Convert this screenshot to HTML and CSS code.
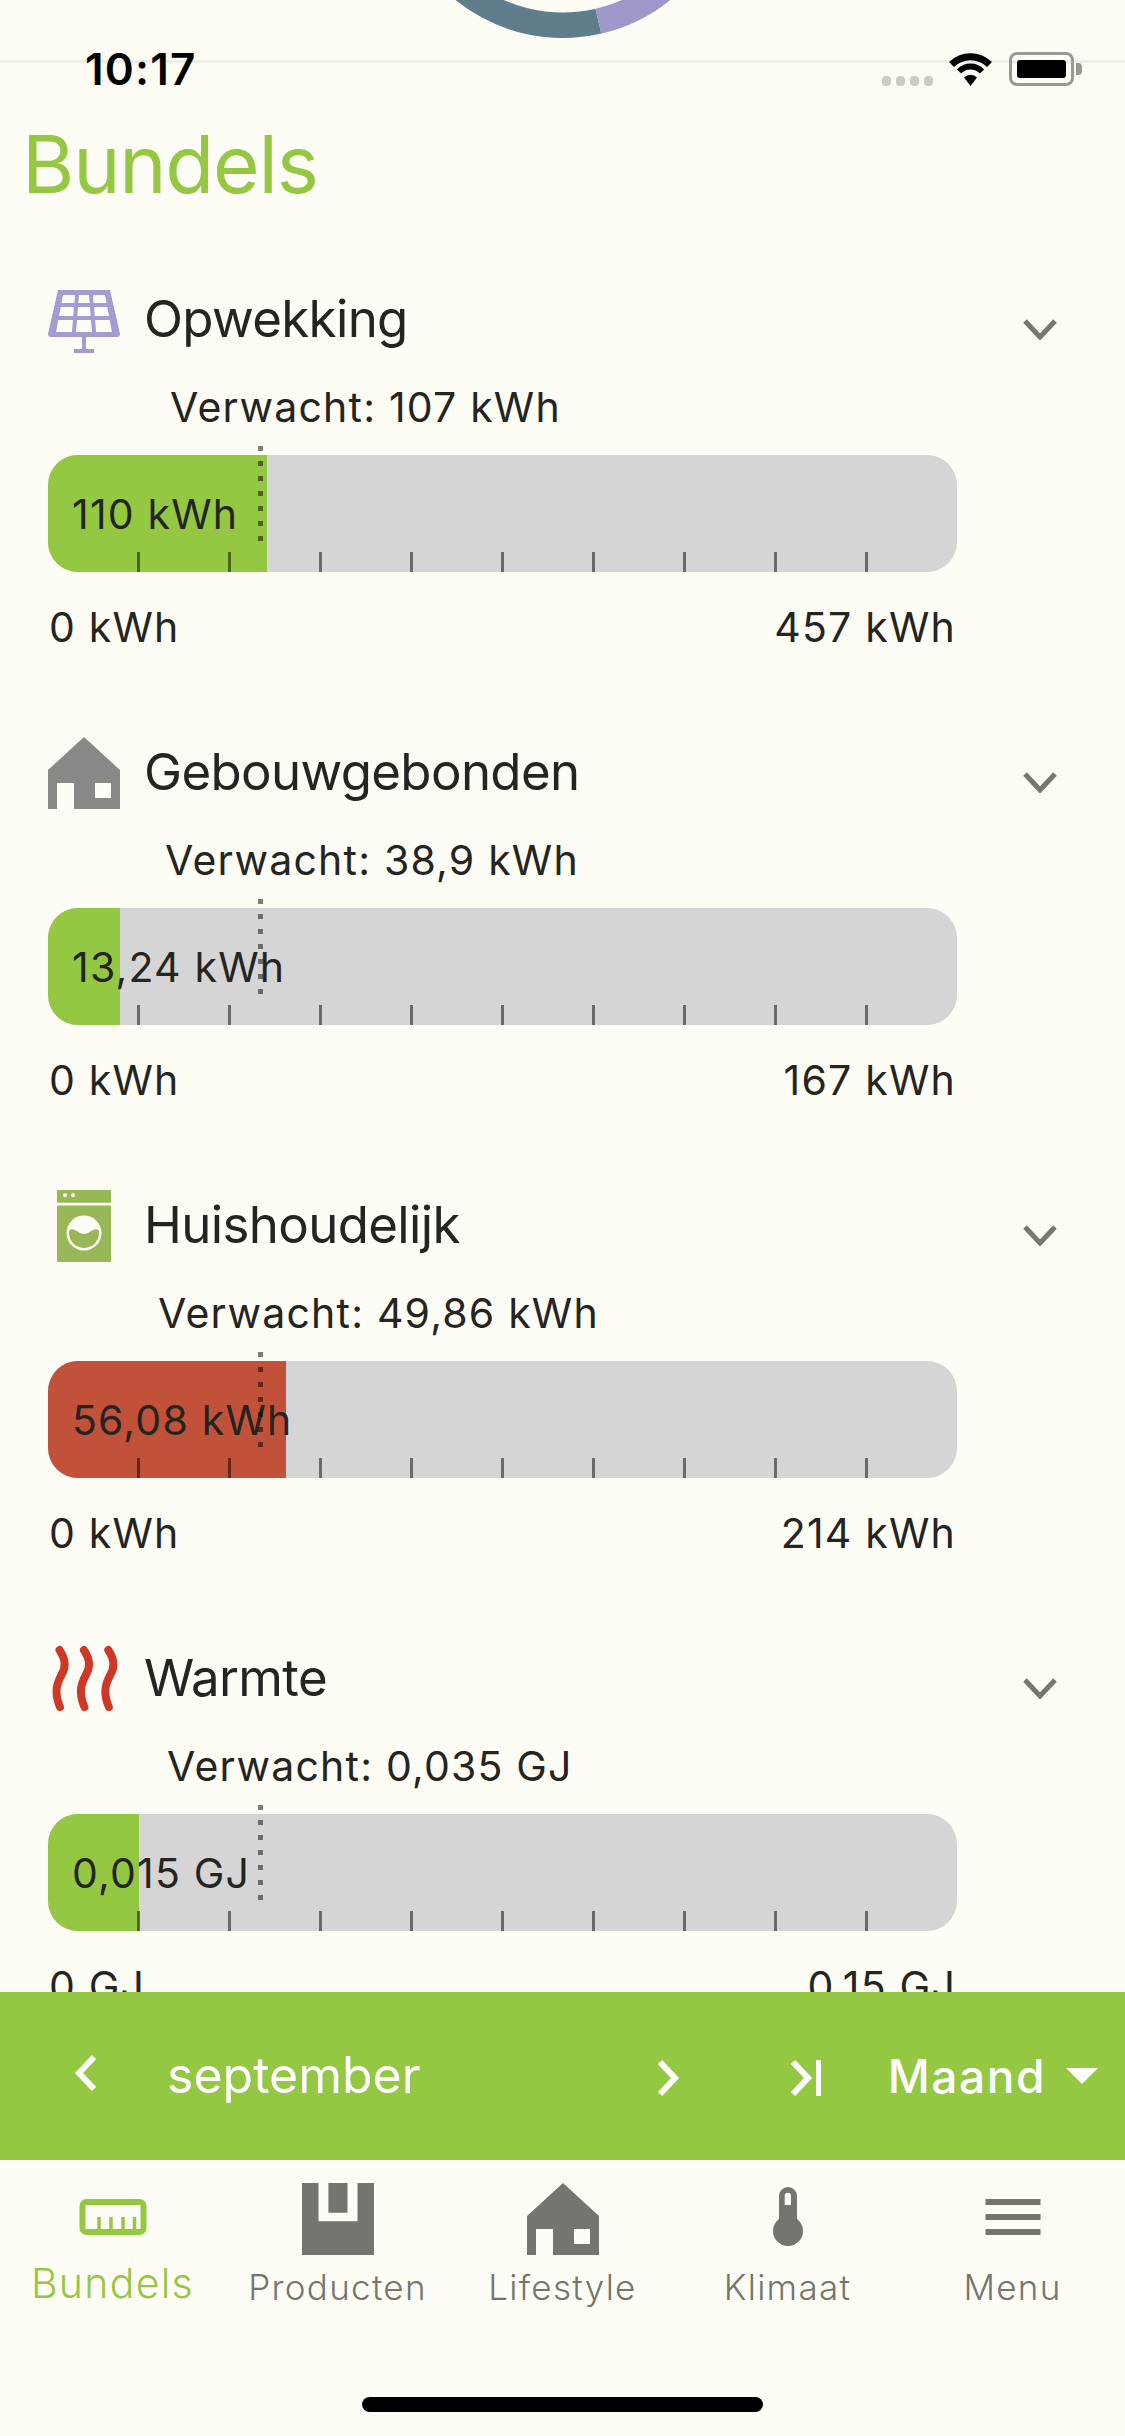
FILE: index.html
```html
<!DOCTYPE html>
<html lang="nl">

<head>
    <meta charset="UTF-8">
    <meta name="viewport" content="width=device-width, initial-scale=1.0">
    <title>Bundels</title>
    <link rel="stylesheet" href="styles.css">
</head>

<body>
    <div class="app">
        <!-- piece of the donut chart scrolled under the status bar -->
        <svg class="donut" width="1125" height="40" viewBox="0 0 1125 40">
            <path d="M415 -78A157.25 157.25 0 0 0 598.4 21.2" fill="none" stroke="#5f7d8c" stroke-width="25.5"/>
            <path d="M598.4 21.2A157.25 157.25 0 0 0 711 -78" fill="none" stroke="#9e98c8" stroke-width="25.5"/>
        </svg>
        <div class="scroll-line"></div>

        <header class="status">
            <span class="time">10:17</span>
            <div class="status-icons">
                <div class="signal"><i></i><i></i><i></i><i></i></div>
                <svg class="wifi" width="45" height="34" viewBox="0 0 45 34">
                    <path d="M3.5 12.5A27 27 0 0 1 41.5 12.5" fill="none" stroke="#000" stroke-width="7"/>
                    <path d="M11 19.5A16 16 0 0 1 34 19.5" fill="none" stroke="#000" stroke-width="6"/>
                    <path d="M22.5 34L16 25.5A9 9 0 0 1 29 25.5Z" fill="#000"/>
                </svg>
                <div class="battery"><div class="battery-level"></div></div>
                <div class="battery-cap"></div>
            </div>
        </header>

        <main class="content">
            <h1 class="page-title">Bundels</h1>

            <section class="bundle">
                <div class="bundle-head">
                    <svg class="bundle-icon" width="72" height="72" viewBox="0 0 72 72">
                        <path fill="#a39cd0" fill-rule="evenodd" d="M10 6H62L72 50Q72 53 69 53H38V65H46V69H26V65H34V53H3Q0 53 0 50ZM15 11L13.5 19H26.4L27 11ZM31 11L30.4 19H41.6L41 11ZM45 11L45.6 19H58.5L57 11ZM12.7 23L11 32H25.3L26 23ZM30 23L29.3 32H42.7L42 23ZM46 23L46.7 32H61L59.3 23ZM10.3 36L8 48H24L25 36ZM29 36L28 48H44L43 36ZM47 36L48 48H64L61.7 36Z"/>
                    </svg>
                    <h2 class="bundle-name">Opwekking</h2>
                    <svg class="chevron" width="34" height="22" viewBox="0 0 34 22"><path d="M2 3L17 19L32 3" fill="none" stroke="#777772" stroke-width="5"/></svg>
                </div>
                <div class="expected" style="margin-left: 122px">Verwacht: 107 kWh</div>
                <div class="bar">
                    <div class="bar-fill" style="width: 24.07%"></div>
                    <span class="bar-value">110 kWh</span>
                    <div class="ticks"><i></i><i></i><i></i><i></i><i></i><i></i><i></i><i></i><i></i></div>
                    <div class="marker"></div>
                </div>
                <div class="range"><span>0 kWh</span><span>457 kWh</span></div>
            </section>

            <section class="bundle">
                <div class="bundle-head">
                    <svg class="bundle-icon" width="72" height="72" viewBox="0 0 72 72">
                        <path fill="#888886" fill-rule="evenodd" d="M36 0L72 33V72H26V46H9V72H0V33ZM47 46V61H63V46Z"/>
                    </svg>
                    <h2 class="bundle-name">Gebouwgebonden</h2>
                    <svg class="chevron" width="34" height="22" viewBox="0 0 34 22"><path d="M2 3L17 19L32 3" fill="none" stroke="#777772" stroke-width="5"/></svg>
                </div>
                <div class="expected" style="margin-left: 117px">Verwacht: 38,9 kWh</div>
                <div class="bar">
                    <div class="bar-fill" style="width: 7.93%"></div>
                    <span class="bar-value">13,24 kWh</span>
                    <div class="ticks"><i></i><i></i><i></i><i></i><i></i><i></i><i></i><i></i><i></i></div>
                    <div class="marker"></div>
                </div>
                <div class="range"><span>0 kWh</span><span>167 kWh</span></div>
            </section>

            <section class="bundle">
                <div class="bundle-head">
                    <svg class="bundle-icon" width="72" height="72" viewBox="0 0 72 72">
                        <path fill="#98b858" fill-rule="evenodd" d="M10 0H62Q63 0 63 1V12.7H9V1Q9 0 10 0ZM17 3.3A2 2 0 1 0 17 7.3A2 2 0 1 0 17 3.3ZM25 3.3A2 2 0 1 0 25 7.3A2 2 0 1 0 25 3.3Z"/>
                        <rect x="9" y="15.5" width="54" height="56.5" rx="1" fill="#98b858"/>
                        <circle cx="36" cy="43" r="17.5" fill="#fdfdf6"/>
                        <path fill="#98b858" d="M21.2 40.5C26 36.5 30 44 36 44C42 44 46 36.5 50.8 40.5A15 15 0 1 1 21.2 40.5Z"/>
                    </svg>
                    <h2 class="bundle-name">Huishoudelijk</h2>
                    <svg class="chevron" width="34" height="22" viewBox="0 0 34 22"><path d="M2 3L17 19L32 3" fill="none" stroke="#777772" stroke-width="5"/></svg>
                </div>
                <div class="expected" style="margin-left: 110px">Verwacht: 49,86 kWh</div>
                <div class="bar">
                    <div class="bar-fill over" style="width: 26.2%"></div>
                    <span class="bar-value">56,08 kWh</span>
                    <div class="ticks"><i></i><i></i><i></i><i></i><i></i><i></i><i></i><i></i><i></i></div>
                    <div class="marker"></div>
                </div>
                <div class="range"><span>0 kWh</span><span>214 kWh</span></div>
            </section>

            <section class="bundle">
                <div class="bundle-head">
                    <svg class="bundle-icon" width="72" height="72" viewBox="0 0 72 72">
                        <g fill="none" stroke="#cf3726" stroke-width="8" stroke-linecap="round">
                            <path d="M11.5 7C18 17 18 24 13.5 32C8.5 41 6 50 12 64"/>
                            <path d="M35.9 7C42.4 17 42.4 24 37.9 32C32.9 41 30.4 50 36.4 64"/>
                            <path d="M60.3 7C66.8 17 66.8 24 62.3 32C57.3 41 54.8 50 60.8 64"/>
                        </g>
                    </svg>
                    <h2 class="bundle-name">Warmte</h2>
                    <svg class="chevron" width="34" height="22" viewBox="0 0 34 22"><path d="M2 3L17 19L32 3" fill="none" stroke="#777772" stroke-width="5"/></svg>
                </div>
                <div class="expected" style="margin-left: 119px">Verwacht: 0,035 GJ</div>
                <div class="bar">
                    <div class="bar-fill" style="width: 10%"></div>
                    <span class="bar-value">0,015 GJ</span>
                    <div class="ticks"><i></i><i></i><i></i><i></i><i></i><i></i><i></i><i></i><i></i></div>
                    <div class="marker"></div>
                </div>
                <div class="range"><span>0 GJ</span><span>0,15 GJ</span></div>
            </section>
        </main>

        <div class="period">
            <div class="period-left">
                <svg class="nav-prev" width="26" height="38" viewBox="0 0 26 38"><path d="M22 3L7 19L22 35" fill="none" stroke="#fff" stroke-width="6"/></svg>
                <span class="period-name">september</span>
            </div>
            <div class="period-right">
                <svg class="nav-next" width="26" height="38" viewBox="0 0 26 38"><path d="M4 3L19 19L4 35" fill="none" stroke="#fff" stroke-width="6"/></svg>
                <svg class="nav-last" width="34" height="38" viewBox="0 0 34 38"><path d="M4 3L19 19L4 35" fill="none" stroke="#fff" stroke-width="6"/><path d="M29.5 1V37" fill="none" stroke="#fff" stroke-width="5"/></svg>
                <span class="period-type">Maand</span>
                <svg class="caret" width="32" height="16" viewBox="0 0 32 16"><path d="M0 0H32L16 16Z" fill="#fff"/></svg>
            </div>
        </div>

        <nav class="tabs">
            <a class="tab active">
                <svg width="72" height="72" viewBox="0 0 72 72">
                    <rect x="5.5" y="19" width="61" height="30" rx="4" fill="none" stroke="#94c842" stroke-width="6"/>
                    <path d="M22 34V47M34 34V47M46 34V47M57.5 34V47" fill="none" stroke="#94c842" stroke-width="3.5"/>
                </svg>
                <span>Bundels</span>
            </a>
            <a class="tab">
                <svg width="72" height="72" viewBox="0 0 72 72">
                    <path fill="#757570" fill-rule="evenodd" d="M0 0H16.5V38.3H55.5V0H72V72H0ZM26.4 0H45.5V29.7H26.4Z"/>
                </svg>
                <span>Producten</span>
            </a>
            <a class="tab">
                <svg width="72" height="72" viewBox="0 0 72 72">
                    <path fill="#757570" fill-rule="evenodd" d="M36 0L72 33V72H26V46H9V72H0V33ZM47 46V61H63V46Z"/>
                </svg>
                <span>Lifestyle</span>
            </a>
            <a class="tab">
                <svg width="72" height="72" viewBox="0 0 72 72">
                    <path fill="#757570" fill-rule="evenodd" d="M27 13A9 9 0 0 1 45 13V36A15 15 0 1 1 27 36ZM32.7 13V22H39V13A3.15 3.15 0 0 0 32.7 13Z"/>
                </svg>
                <span>Klimaat</span>
            </a>
            <a class="tab">
                <svg width="72" height="72" viewBox="0 0 72 72">
                    <path fill="#757570" d="M8.5 16H63.5V22H8.5ZM8.5 31H63.5V37H8.5ZM8.5 46H63.5V52H8.5Z"/>
                </svg>
                <span>Menu</span>
            </a>
            <div class="home-indicator"></div>
        </nav>
    </div>
</body>

</html>
```

FILE: styles.css
```css
* {
    margin: 0;
    padding: 0;
    box-sizing: border-box;
}

body {
    font-family: "Inter", "Liberation Sans", sans-serif;
    color: #242421;
    background-color: #fdfdf6;
}

.app {
    position: relative;
    width: 1125px;
    height: 2436px;
    display: flex;
    flex-direction: column;
    overflow: hidden;
}

.donut {
    position: absolute;
    top: 0;
    left: 0;
}

.scroll-line {
    position: absolute;
    top: 60px;
    left: 0;
    width: 100%;
    height: 3px;
    background-color: #eeeee8;
}

/* status bar */
.status {
    position: relative;
    flex: none;
    height: 100px;
    padding: 52px 43px 0 85px;
    display: flex;
    justify-content: space-between;
    align-items: flex-start;
}

.time {
    font-size: 44px;
    font-weight: 600;
    line-height: 34px;
    letter-spacing: 1.2px;
    color: #000;
}

.status-icons {
    display: flex;
    align-items: flex-start;
}

.signal {
    display: flex;
    gap: 5px;
    margin: 24px 15px 0 0;
}

.signal i {
    width: 9px;
    height: 10px;
    border-radius: 4px;
    background-color: #ccccc4;
}

.wifi {
    margin-right: 16px;
}

.battery {
    width: 65px;
    height: 34px;
    padding: 5px 5px;
    border: 3px solid #999994;
    border-radius: 8px;
}

.battery-level {
    height: 100%;
    border-radius: 3px;
    background-color: #000;
}

.battery-cap {
    width: 6px;
    height: 12px;
    margin: 11px 0 0 2px;
    border-radius: 0 4px 4px 0;
    background-color: #999994;
}

/* list of bundles */
.content {
    flex: 1;
    min-height: 0;
    overflow: hidden;
}

.page-title {
    margin: 16px 0 72px 22px;
    font-size: 80px;
    font-weight: 400;
    line-height: 96px;
    letter-spacing: -1.2px;
    color: #94c842;
}

.bundle {
    height: 453px;
    padding: 0 48px;
}

.bundle-head {
    position: relative;
    height: 72px;
    margin-right: -48px;
    display: flex;
    align-items: center;
}

.bundle-icon {
    flex: none;
}

.bundle-name {
    margin: 0 0 2px 24px;
    font-size: 51px;
    font-weight: 400;
    line-height: 62px;
    letter-spacing: -0.65px;
}

.chevron {
    position: absolute;
    top: 34px;
    left: 975px;
}

.expected {
    margin-top: 27px;
    font-size: 41px;
    line-height: 48px;
    letter-spacing: 1.2px;
}

.bar {
    position: relative;
    width: 909px;
    height: 117px;
    margin-top: 24px;
    padding-left: 24px;
    display: flex;
    align-items: center;
    border-radius: 30px;
    background-color: #d5d5d5;
}

.bar-fill {
    position: absolute;
    top: 0;
    bottom: 0;
    left: 0;
    border-radius: 30px 0 0 30px;
    background-color: #94c842;
}

.bar-fill.over {
    background-color: #c2513a;
}

.bar-value {
    position: relative;
    font-size: 41px;
    line-height: 48px;
    letter-spacing: 1.2px;
}

.ticks {
    position: absolute;
    left: 1.5px;
    right: -1.5px;
    bottom: 0;
    height: 20px;
    display: flex;
    padding-right: 90.9px;
}

.ticks i {
    flex: 1;
    border-right: 3px solid rgba(0, 0, 0, 0.5);
}

.marker {
    position: absolute;
    top: -9px;
    left: 210px;
    width: 5px;
    height: 95px;
    background: repeating-linear-gradient(to bottom, rgba(0, 0, 0, 0.5) 0 5px, transparent 5px 15px);
}

.range {
    width: 907px;
    margin: 31px 0 0 1px;
    display: flex;
    justify-content: space-between;
    font-size: 41px;
    line-height: 48px;
    letter-spacing: 1.2px;
}

/* month selector */
.period {
    flex: none;
    height: 168px;
    padding: 0 27px 0 72px;
    display: flex;
    justify-content: space-between;
    align-items: center;
    color: #fff;
    background-color: #94c842;
}

.period-left,
.period-right {
    display: flex;
    align-items: center;
}

.nav-prev {
    margin-bottom: 6px;
}

.period-name {
    margin: 0 0 2px 69px;
    font-size: 50px;
    line-height: 60px;
}

.nav-next {
    margin-top: 4px;
}

.nav-last {
    margin: 4px 0 0 107px;
}

.period-type {
    margin-left: 65px;
    font-size: 46px;
    font-weight: 500;
    line-height: 56px;
    letter-spacing: 1.6px;
}

.caret {
    margin-left: 20px;
}

/* bottom navigation */
.tabs {
    position: relative;
    flex: none;
    height: 276px;
    padding-top: 23px;
    display: flex;
    align-items: flex-start;
}

.tab {
    flex: 1;
    display: flex;
    flex-direction: column;
    align-items: center;
    font-size: 35px;
    font-weight: 300;
    line-height: 42px;
    letter-spacing: 1.3px;
    color: #757570;
}

.tab svg {
    display: block;
}

.tab span {
    margin-top: 11px;
}

.tab.active {
    font-size: 41px;
    color: #94c842;
}

.tab.active span {
    margin-top: 7px;
}

.home-indicator {
    position: absolute;
    left: 362px;
    bottom: 24px;
    width: 401px;
    height: 15px;
    border-radius: 8px;
    background-color: #000;
}
```
